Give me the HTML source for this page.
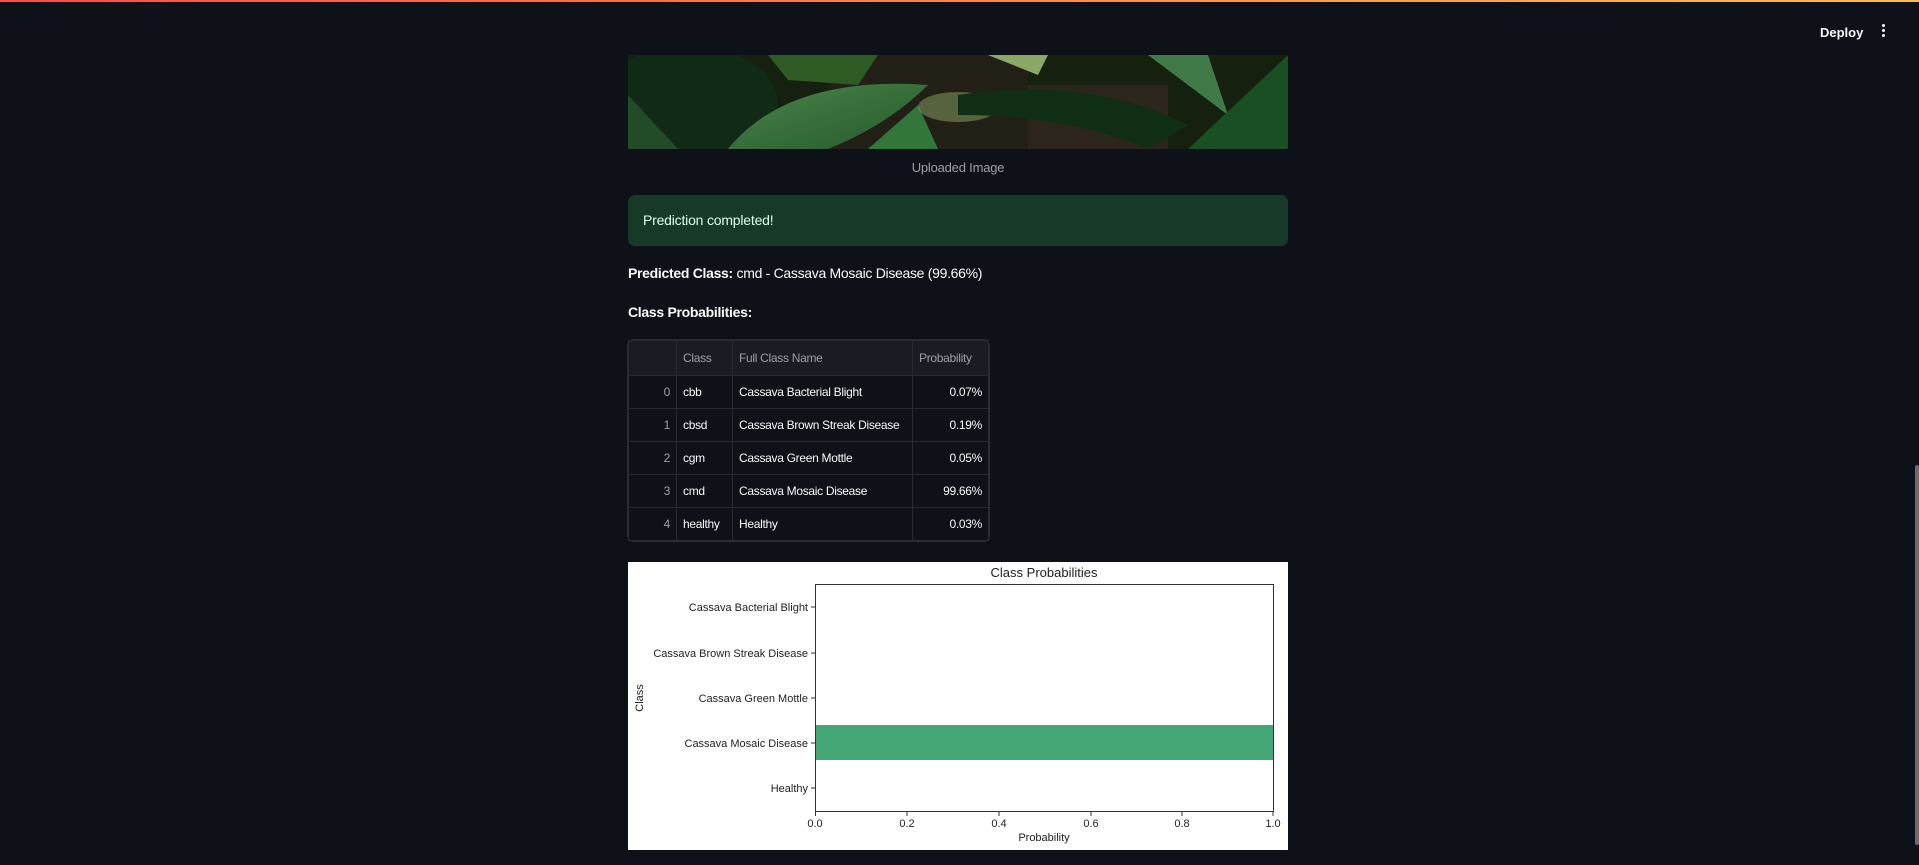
<!DOCTYPE html>
<html><head><meta charset="utf-8">
<style>
*{margin:0;padding:0;box-sizing:border-box}
body{width:1919px;height:865px;background:#0e1117;overflow:hidden;position:relative;font-family:"Liberation Sans",sans-serif;color:#fafafa}
.topbar{position:absolute;left:0;top:0;width:1919px;height:2px;background:linear-gradient(90deg,#ff4b4b,#ffbd45)}
.deploy{position:absolute;left:1820px;top:25px;font-size:13px;font-weight:bold;color:#fafafa}
.dots{position:absolute;left:1882px;top:24px;width:4px}
.dots i{display:block;width:3px;height:3px;background:#fafafa;border-radius:50%;margin-bottom:2px}
.scroll{position:absolute;left:1915px;top:465px;width:4px;height:380px;background:#6b6b6b;border-radius:2px}
.img{position:absolute;left:628px;top:55px;width:660px;height:94px;overflow:hidden;border-radius:2px}
.cap{position:absolute;left:628px;width:660px;top:160px;text-align:center;font-size:13px;color:#9aa0a8;letter-spacing:-0.2px}
.alert{position:absolute;left:628px;top:195px;width:660px;height:51px;background:#173928;border-radius:7px;font-size:14px;color:#dffde9;padding:17px 0 0 15px;letter-spacing:-0.2px}
.pred{position:absolute;left:628px;top:265px;font-size:14px;letter-spacing:-0.3px}
.cp{position:absolute;left:628px;top:304px;font-size:14px;font-weight:bold;letter-spacing:-0.3px}
table{position:absolute;left:628px;top:340px;border-collapse:collapse;font-size:12px;letter-spacing:-0.3px;table-layout:fixed;width:360px;outline:1px solid #2a2d35;border-radius:6px}
td,th{height:33px;border:1px solid #262a33;padding:0 6px;white-space:nowrap;overflow:hidden}
th{font-weight:normal;color:#9aa0a8;text-align:left;background:#1a1c24;height:35px}
td.i{text-align:right;color:#9aa0a8}
td.p{text-align:right}
.chart{position:absolute;left:628px;top:562px;width:660px;height:288px;background:#fff}
</style></head><body>
<div class="topbar"></div>
<div class="deploy">Deploy</div>
<div class="dots"><i></i><i></i><i></i></div>
<div class="scroll"></div>
<div class="img">
<svg width="660" height="94" viewBox="0 0 660 94">
<defs><linearGradient id="g1" x1="0" y1="0" x2="1" y2="1"><stop offset="0" stop-color="#4a844a"/><stop offset="1" stop-color="#245a2b"/></linearGradient></defs>
<rect width="660" height="94" fill="#15200f"/>
<rect x="200" y="0" width="200" height="94" fill="#221f17"/>
<rect x="400" y="30" width="140" height="64" fill="#2b251c"/>
<ellipse cx="60" cy="50" rx="90" ry="60" fill="#112a16"/>
<path d="M100 94 Q160 20 300 30 Q260 70 200 94Z" fill="url(#g1)"/>
<path d="M240 94 L290 50 L310 94Z" fill="#32763a"/>
<path d="M140 0 L250 0 L230 30 L160 25Z" fill="#2e5a24"/>
<ellipse cx="330" cy="52" rx="40" ry="15" fill="#8aa866" opacity=".5"/>
<path d="M330 40 Q460 20 560 70 L520 94 Q440 60 330 60Z" fill="#102e14"/>
<path d="M520 0 L580 0 L600 60 Z" fill="#3f7a48"/>
<path d="M560 94 L660 0 L660 94Z" fill="#1a4f23"/>
<path d="M360 0 L420 0 L410 20Z" fill="#8aa866"/>
<path d="M0 40 L50 94 L0 94Z" fill="#224b27"/>
</svg></div>
<div class="cap">Uploaded Image</div>
<div class="alert">Prediction completed!</div>
<div class="pred"><b>Predicted Class:</b> cmd - Cassava Mosaic Disease (99.66%)</div>
<div class="cp">Class Probabilities:</div>
<table>
<colgroup><col style="width:48px"><col style="width:56px"><col style="width:180px"><col style="width:76px"></colgroup>
<tr><th></th><th>Class</th><th>Full Class Name</th><th>Probability</th></tr>
<tr><td class="i">0</td><td>cbb</td><td>Cassava Bacterial Blight</td><td class="p">0.07%</td></tr>
<tr><td class="i">1</td><td>cbsd</td><td>Cassava Brown Streak Disease</td><td class="p">0.19%</td></tr>
<tr><td class="i">2</td><td>cgm</td><td>Cassava Green Mottle</td><td class="p">0.05%</td></tr>
<tr><td class="i">3</td><td>cmd</td><td>Cassava Mosaic Disease</td><td class="p">99.66%</td></tr>
<tr><td class="i">4</td><td>healthy</td><td>Healthy</td><td class="p">0.03%</td></tr>
</table>
<div class="chart">
<svg width="660" height="288" viewBox="0 0 660 288" font-family="Liberation Sans, sans-serif" font-size="11" fill="#222">
<text x="416" y="15" text-anchor="middle" font-size="13">Class Probabilities</text>
<rect x="188" y="163" width="457" height="35" fill="#45a776"/>
<rect x="187.5" y="22.5" width="458" height="227" fill="none" stroke="#333" stroke-width="1"/>
<g text-anchor="end">
<text x="180" y="49">Cassava Bacterial Blight</text>
<text x="180" y="95">Cassava Brown Streak Disease</text>
<text x="180" y="140">Cassava Green Mottle</text>
<text x="180" y="185">Cassava Mosaic Disease</text>
<text x="180" y="230">Healthy</text>
</g>
<g stroke="#333"><line x1="183" x2="187" y1="45" y2="45"/><line x1="183" x2="187" y1="91" y2="91"/><line x1="183" x2="187" y1="136" y2="136"/><line x1="183" x2="187" y1="181" y2="181"/><line x1="183" x2="187" y1="226" y2="226"/>
<line x1="187.5" x2="187.5" y1="250" y2="254"/><line x1="279" x2="279" y1="250" y2="254"/><line x1="371" x2="371" y1="250" y2="254"/><line x1="463" x2="463" y1="250" y2="254"/><line x1="554" x2="554" y1="250" y2="254"/><line x1="645" x2="645" y1="250" y2="254"/></g>
<g text-anchor="middle">
<text x="187" y="265">0.0</text><text x="279" y="265">0.2</text><text x="371" y="265">0.4</text><text x="463" y="265">0.6</text><text x="554" y="265">0.8</text><text x="645" y="265">1.0</text>
<text x="416" y="279">Probability</text>
</g>
<text transform="translate(15,136) rotate(-90)" text-anchor="middle">Class</text>
</svg></div>
</body></html>
